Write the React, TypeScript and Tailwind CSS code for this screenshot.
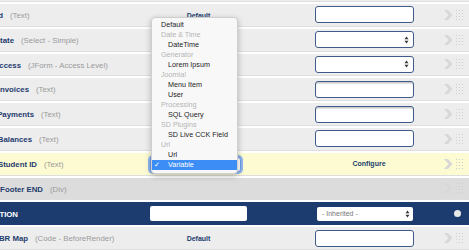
import React from "react";

type FieldRow = {
  label: string;
  endW: string;
  type?: string;
  middle?: "default" | "select";
  right: "input" | "inputShade" | "select" | "configure";
  tone: "plain" | "yellow" | "footer";
};

const rows: FieldRow[] = [
  { label: "Record Id", endW: "w-[3px]", type: "Text", middle: "default", right: "input", tone: "plain" },
  { label: "State", endW: "w-[14px]", type: "Select - Simple", right: "select", tone: "plain" },
  { label: "Access", endW: "w-[21px]", type: "JForm - Access Level", right: "select", tone: "plain" },
  { label: "Invoices", endW: "w-[29px]", type: "Text", right: "inputShade", tone: "plain" },
  { label: "Payments", endW: "w-[34px]", type: "Text", right: "inputShade", tone: "plain" },
  { label: "Balances", endW: "w-[32px]", type: "Text", right: "input", tone: "plain" },
  { label: "Student ID", endW: "w-[37px]", type: "Text", middle: "select", right: "configure", tone: "yellow" },
  { label: "Page Footer END", endW: "w-[43px]", type: "Div", tone: "footer", right: "configure" },
];

const menuItems: { text: string; kind: "item" | "group" | "child" | "selected" }[] = [
  { text: "Default", kind: "item" },
  { text: "Date & Time", kind: "group" },
  { text: "DateTime", kind: "child" },
  { text: "Generator", kind: "group" },
  { text: "Lorem Ipsum", kind: "child" },
  { text: "Joomla!", kind: "group" },
  { text: "Menu Item", kind: "child" },
  { text: "User", kind: "child" },
  { text: "Processing", kind: "group" },
  { text: "SQL Query", kind: "child" },
  { text: "SD Plugins", kind: "group" },
  { text: "SD Live CCK Field", kind: "child" },
  { text: "Url", kind: "group" },
  { text: "Url", kind: "child" },
  { text: "Variable", kind: "selected" },
];

const Chevron = () => (
  <svg width="9" height="10" viewBox="0 0 9 10">
    <polygon points="0,0 4,0 8.5,5 4,10 0,10 4.5,5" fill="#d8d8d8" />
  </svg>
);

const Dots = () => (
  <svg width="8" height="10" viewBox="0 0 8 10">
    {[0.5, 3.5, 6.5].map((x) =>
      [0.5, 3.5, 6.5, 9.5].map((y) => (
        <rect key={`${x}-${y}`} x={x - 0.5} y={y - 0.5} width="1" height="1" fill="#cfcfcf" />
      ))
    )}
  </svg>
);

const UpDown = ({ color = "#333" }: { color?: string }) => (
  <svg width="5" height="8" viewBox="0 0 5 8">
    <polygon points="0.5,3.2 2.5,0.6 4.5,3.2" fill={color} />
    <polygon points="0.5,4.8 2.5,7.4 4.5,4.8" fill={color} />
  </svg>
);

const RightInput = ({ kind }: { kind: FieldRow["right"] }) => {
  if (kind === "configure") {
    return (
      <div className="w-[99px] flex justify-center pl-[9px] pt-[2px] text-[7px] font-bold text-[#233f6e]">
        Configure
      </div>
    );
  }
  const shade = kind === "inputShade" ? "shadow-[inset_0_1.5px_1px_rgba(0,0,0,0.22)]" : "";
  return (
    <div
      className={`w-[99px] h-[17px] bg-white border border-[#3f5b8b] rounded-[3px] flex items-center justify-end pr-[4px] ${shade}`}
    >
      {kind === "select" && <UpDown />}
    </div>
  );
};

const Row = ({ row }: { row: FieldRow }) => {
  const bg =
    row.tone === "yellow" ? "bg-[#fdfbd1]" : row.tone === "footer" ? "bg-[#dcdcdc]" : "bg-[#ededed]";
  return (
    <div className={`flex items-center h-[22.8px] border-b border-[#dedede] ${bg}`}>
      <div className="w-[150px] flex items-center shrink-0 pt-[2px]">
        <div className={`flex justify-end shrink-0 ${row.endW}`}>
          <span className="whitespace-nowrap shrink-0 font-bold text-[7.8px] text-[#1f3c6d]">
            {row.label}
          </span>
        </div>
        {row.type && (
          <span className="ml-[7px] whitespace-nowrap text-[7.8px] text-[#9a9a9a]">({row.type})</span>
        )}
      </div>
      <div className="w-[97px] shrink-0 flex items-center">
        {row.middle === "default" && (
          <div className="w-full pt-[2px] text-center text-[7px] font-bold text-[#233f6e]">Default</div>
        )}
        {row.middle === "select" && (
          <div className="w-[91px] h-[15px] mt-[1px] bg-white rounded-[3px] border border-[#6d9de6] ring-2 ring-[#8fb5f2]" />
        )}
      </div>
      <div className="w-[68px] shrink-0" />
      {row.tone === "footer" ? <div className="w-[99px]" /> : <RightInput kind={row.right} />}
      <div className="ml-[30px] flex items-center gap-[3px]">
        <Chevron />
        <Dots />
      </div>
    </div>
  );
};

export default function App() {
  return (
    <div
      className="relative w-[469px] h-[250px] overflow-hidden bg-white"
      style={{ fontFamily: '"Liberation Sans", Arial, sans-serif' }}
    >
      <div className="flex flex-col gap-[2px]">
        <div className="h-[2px] bg-[#ededed] border-b border-[#dedede]" />
        {rows.map((r) => (
          <Row key={r.label} row={r} />
        ))}
        <div className="flex items-center h-[22.8px] bg-[#1c3b6e]">
          <div className="w-[150px] flex items-center shrink-0 pt-[2px]">
            <div className="flex justify-end shrink-0 w-[18px]">
              <span className="whitespace-nowrap shrink-0 font-bold text-[7.8px] text-white">SECTION</span>
            </div>
          </div>
          <div className="w-[97px] h-[15px] bg-white rounded-[2px] shrink-0" />
          <div className="w-[70px] shrink-0" />
          <div className="w-[96px] h-[14px] bg-white rounded-[2px] flex items-center justify-between pl-[5px] pr-[3px]">
            <span className="text-[7px] text-[#777]">- Inherited -</span>
            <UpDown />
          </div>
          <div className="ml-[41px] w-[7px] h-[7px] rounded-full bg-[#e8e8e8]" />
        </div>
        <Row
          row={{
            label: "BR Map",
            endW: "w-[28px]",
            type: "Code - BeforeRender",
            middle: "default",
            right: "input",
            tone: "plain",
          }}
        />
      </div>

      <div className="absolute left-[151px] top-[17px] w-[87px] pt-[2px] pb-[3px] bg-[#f8f8f8] border border-[#cfcfcf] rounded-[4px] shadow-[0_2px_6px_rgba(0,0,0,0.25)]">
        {menuItems.map((m, i) => (
          <div
            key={i}
            className={`h-[10px] flex items-center text-[7.2px] leading-none whitespace-nowrap ${
              m.kind === "selected" ? "bg-[#3c8df6] text-white" : ""
            } ${m.kind === "group" ? "text-[#b5b5b5] pl-[9px]" : ""} ${
              m.kind === "item" ? "text-[#1c1c1c] pl-[9px]" : ""
            } ${m.kind === "child" ? "text-[#1c1c1c] pl-[16px]" : ""}`}
          >
            {m.kind === "selected" && (
              <>
                <span
                  className="w-[13px] pl-[2px] text-[7px]"
                  style={{ fontFamily: '"DejaVu Sans", sans-serif' }}
                >
                  ✓
                </span>
                <span className="pl-[3px]">{m.text}</span>
              </>
            )}
            {m.kind !== "selected" && m.text}
          </div>
        ))}
      </div>
    </div>
  );
}
